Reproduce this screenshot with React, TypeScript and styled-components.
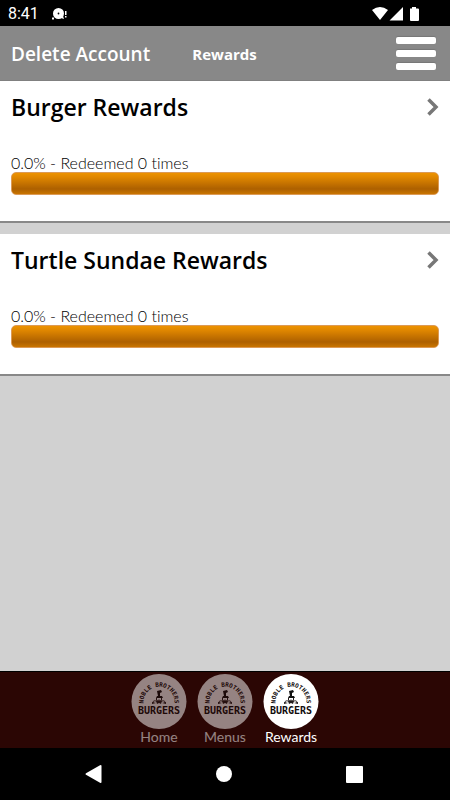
import React from "react";
import styled, { createGlobalStyle } from "styled-components";

const GlobalStyle = createGlobalStyle`
  *, *::before, *::after { box-sizing: border-box; }
  body {
    margin: 0;
    background: #d1d1d1;
    color: #000;
    font-family: "Lato", "Liberation Sans", sans-serif;
    font-variant-ligatures: none;
  }
  h1, h2, p { margin: 0; }
  button { border: 0; padding: 0; background: none; color: inherit; font: inherit; cursor: pointer; }
  svg { display: block; }
`;

const titleFont = `"Open Sans", "Noto Sans", sans-serif`;

const Screen = styled.div`
  display: flex;
  flex-direction: column;
  min-height: 100vh;
`;

const StatusBar = styled.div`
  display: flex;
  align-items: center;
  justify-content: space-between;
  height: 26px;
  padding: 1px 30px 0 8px;
  background: #000;
  color: #fff;
  font: 400 16px/26px "Roboto", sans-serif;
`;

const StatusGroup = styled.div<{ $gap: number }>`
  display: flex;
  align-items: center;
  gap: ${({ $gap }) => $gap}px;
`;

const Header = styled.header`
  display: grid;
  grid-template-columns: 1fr auto 1fr;
  align-items: center;
  height: 55px;
  padding: 1px 12px 0 11px;
  background: #888;
  border-bottom: 1px solid #808080;
  color: #fff;
  font-family: ${titleFont};
  white-space: nowrap;
`;

const DeleteButton = styled.button`
  justify-self: start;
  font-size: 19px;
  font-weight: 600;
  line-height: 28px;
`;

const PageTitle = styled.h1`
  font-size: 15px;
  font-weight: 700;
  line-height: 28px;
`;

const MenuButton = styled.button`
  display: flex;
  flex-direction: column;
  justify-self: end;
  gap: 6px;
  padding: 0 2px;
`;

const MenuBar = styled.span`
  width: 40px;
  height: 7px;
  border-radius: 2px;
  background: #fff;
  box-shadow: 0 -1px 1px #777;
`;

const RewardList = styled.main`
  display: flex;
  flex: 1;
  flex-direction: column;
  gap: 11px;
`;

const Card = styled.section`
  height: 142px;
  padding: 9px 11px 0;
  background: #fff;
  border-bottom: 2px solid #888;
`;

const CardHeading = styled.button`
  display: flex;
  align-items: center;
  justify-content: space-between;
  width: 100%;
  height: 34px;
  text-align: left;
`;

const CardTitle = styled.h2`
  font: 600 23px/34px ${titleFont};
`;

const RewardStatus = styled.p`
  margin-top: 29px;
  font-size: 16px;
  font-weight: 300;
  line-height: 19px;
`;

const ProgressTrack = styled.div`
  height: 23px;
  border: 1px solid #dc9a55;
  border-radius: 5px;
  background: linear-gradient(#ed9300 0%, #e08700 20%, #ad6000 76%, #c97500 100%);
`;

const TabBar = styled.nav`
  display: flex;
  justify-content: center;
  gap: 10px;
  height: 77px;
  padding-top: 2px;
  background: #2b0604;
  border-top: 1px solid #000;
`;

const Tab = styled.button<{ $active: boolean }>`
  display: flex;
  flex-direction: column;
  align-items: center;
  width: 56px;
  color: #fff;
  font-size: 14px;
  line-height: 15px;
  opacity: ${({ $active }) => ($active ? 1 : 0.5)};
`;

const SystemNav = styled.div`
  display: flex;
  align-items: center;
  justify-content: space-between;
  height: 52px;
  padding: 0 87px 0 85px;
  background: #000;
`;

function BrandLogo({ id }: { id: string }) {
  return (
    <svg width="56" height="55" viewBox="0 0 56 55" aria-hidden="true">
      <circle cx="28" cy="27.5" r="27.5" fill="#fff" />
      <defs>
        <path id={id} d="M13 32A15.5 15.5 0 1 1 43 32" />
      </defs>
      <g fontFamily="DejaVu Sans Mono, monospace" fill="#110c0d" textAnchor="middle" fontWeight="700">
        <text fontSize="6">
          <textPath href={`#${id}`} startOffset="50%">NOBLE BROTHERS</textPath>
        </text>
        <text x="28" y="40" fontSize="10">BURGERS</text>
      </g>
      <path d="M26 17l4-1 1 2-2 1v3h2l1 2h-7l1-2h1z" fill="#111" />
      <path d="M25.5 24v2.5M30.5 24v2.5M22 29c0-3 2-2 4-2l2-1 2 1c2 0 4-1 4 2" fill="none" stroke="#221b1c" />
      <path d="M25 27h6l-1 3-2-1-2 1zM21 28l4 1-4 1zM35 28l-4 1 4 1z" fill="#221b1c" />
    </svg>
  );
}

const rewards = ["Burger Rewards", "Turtle Sundae Rewards"];
const tabs = ["Home", "Menus", "Rewards"];

export default function App() {
  return (
    <>
      <GlobalStyle />
      <Screen>
        <StatusBar>
          <StatusGroup $gap={13}>
            <span>8:41</span>
            <svg width="16" height="14" viewBox="0 0 16 14" fill="#fff" aria-hidden="true">
              <circle cx="6.5" cy="6.5" r="5.5" />
              <circle cx="6.5" cy="6.5" r=".9" fill="#000" />
              <path d="M0 10.5h2v2H0zM9 11l3 1-1-3zM13 4h1.5v4H13zM13 9h1.5v1.5H13z" />
            </svg>
          </StatusGroup>
          <svg width="48" height="14" viewBox="0 0 48 14" fill="#fff" aria-hidden="true">
            <path d="M0 3q8-6 16 0L8 13zM17.5 13.5L31 0v13.5zM38 1.5h2V0h4v1.5h2q1 0 1 1V13q0 1-1 1h-7q-1 0-1-1z" />
          </svg>
        </StatusBar>
        <Header>
          <DeleteButton>Delete Account</DeleteButton>
          <PageTitle>Rewards</PageTitle>
          <MenuButton aria-label="Menu">
            <MenuBar />
            <MenuBar />
            <MenuBar />
          </MenuButton>
        </Header>
        <RewardList>
          {rewards.map((name) => (
            <Card key={name}>
              <CardHeading>
                <CardTitle>{name}</CardTitle>
                <svg width="12" height="18" viewBox="0 0 12 18" fill="none" aria-hidden="true">
                  <path d="M1.5 1.5L9 9l-7.5 7.5" stroke="#777" strokeWidth="3.5" />
                </svg>
              </CardHeading>
              <RewardStatus>0.0% - Redeemed 0 times</RewardStatus>
              <ProgressTrack role="progressbar" aria-label={name} aria-valuenow={0} aria-valuemin={0} aria-valuemax={100} />
            </Card>
          ))}
        </RewardList>
        <TabBar>
          {tabs.map((name) => (
            <Tab key={name} $active={name === "Rewards"} aria-current={name === "Rewards" ? "page" : undefined}>
              <BrandLogo id={`arc-${name}`} />
              <span>{name}</span>
            </Tab>
          ))}
        </TabBar>
        <SystemNav>
          <svg width="17" height="18" viewBox="0 0 17 18" fill="#fff" aria-hidden="true">
            <path d="M1 8.2L15 .3Q16.5-.3 16.5 1v16q0 1.3-1.5.7L1 9.8Q0 9 1 8.2z" />
          </svg>
          <svg width="16" height="16" viewBox="0 0 16 16" fill="#fff" aria-hidden="true">
            <circle cx="8" cy="8" r="8" />
          </svg>
          <svg width="17" height="17" viewBox="0 0 17 17" fill="#fff" aria-hidden="true">
            <rect width="17" height="17" rx="1" />
          </svg>
        </SystemNav>
      </Screen>
    </>
  );
}
